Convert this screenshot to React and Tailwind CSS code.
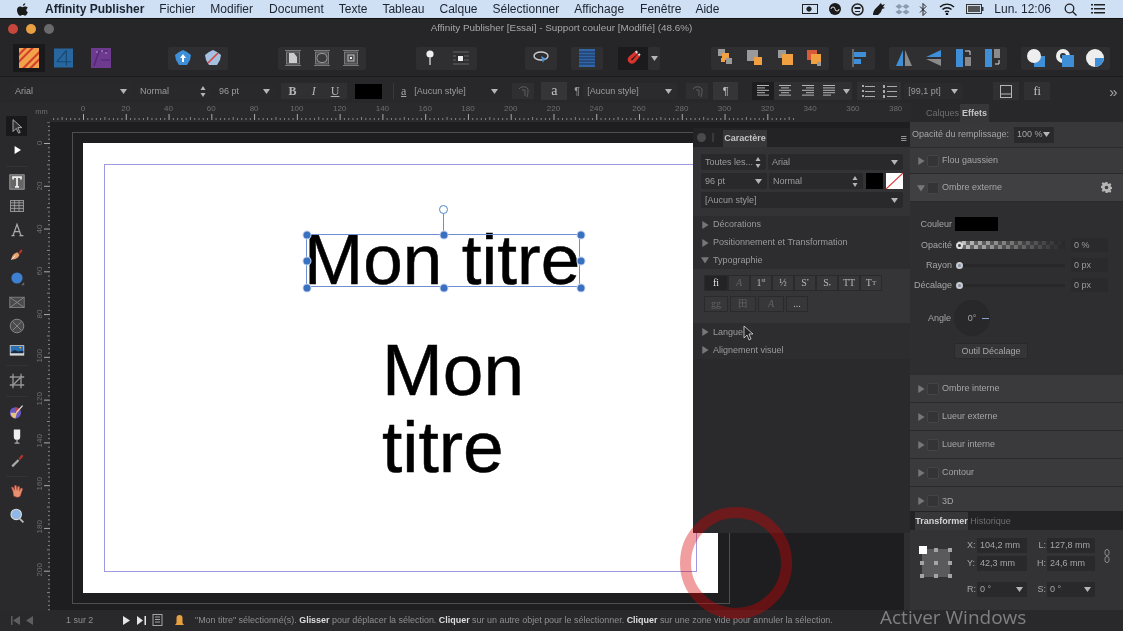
import React from 'react';

const Tri = ({ open, cls = 'fill-[#77777a]' }) => (
  <svg width="8" height="8" viewBox="0 0 9 9" className={cls + ' shrink-0'}>
    {open ? <path d="M0 1.5h9L4.5 8.5z" /> : <path d="M1.5 0l7 4.5-7 4.5z" />}
  </svg>
);
const Down = () => <svg width="7" height="5" viewBox="0 0 7 5" className="fill-[#b5b5b5] shrink-0"><path d="M0 0h7L3.5 5z" /></svg>;
const Updown = () => (
  <svg width="6" height="11" viewBox="0 0 6 11" className="fill-[#b5b5b5] shrink-0"><path d="M3 0l2.5 4h-5zM3 11L.5 7h5z" /></svg>
);

/* ---------- toolbar drawings ---------- */
const PersonaA = () => (
  <svg width="20" height="20" viewBox="0 0 20 20">
    <rect width="20" height="20" fill="#f2a24a" />
    <path d="M0 5L5 0h3L0 8zM0 12L12 0h3L0 15zM3 20L20 3v3L6 20zM10 20L20 10v3l-7 7z" fill="#d2402c" />
  </svg>
);
const PersonaB = () => (
  <svg width="20" height="20" viewBox="0 0 20 20">
    <rect width="20" height="20" fill="#27669e" />
    <path d="M3 14L13 2M13 2v16M3 14h15" stroke="#174770" strokeWidth="1.2" fill="none" />
  </svg>
);
const PersonaC = () => (
  <svg width="20" height="20" viewBox="0 0 20 20">
    <rect width="20" height="20" fill="#6d3a8f" />
    <path d="M3 18L8 3M8 3h9M10 12h9" stroke="#4e2670" strokeWidth="1.2" fill="none" />
    <circle cx="11" cy="3" r="1" fill="#9b79c0" /><circle cx="15" cy="5" r="1" fill="#9b79c0" /><circle cx="6" cy="4" r="1" fill="#9b79c0" />
  </svg>
);
const Penta = ({ fill, slash }) => (
  <svg width="18" height="18" viewBox="0 0 18 18">
    <path d="M9 1l4 2 4 3-1 5-3 5H5l-3-5-1-5 4-3z" fill={fill} />
    {slash ? <path d="M4 14L14 4" stroke="#d8453a" strokeWidth="1.6" /> : <path d="M9 5l3 4h-2v4H8V9H6z" fill="#fff" />}
  </svg>
);
const DocI = ({ kind }) => (
  <svg width="18" height="18" viewBox="0 0 18 18">
    <path d="M1 1.5h16M1 16.5h16" stroke="#7a7a7c" strokeWidth="1" />
    <rect x="2.5" y="3" width="13" height="12" fill="#4c4c4e" stroke="#7a7a7c" />
    {kind === 0 && <path d="M5 4h5l3 4v6H5z" fill="#ccc" />}
    {kind === 1 && <rect x="4" y="4.5" width="10" height="9" rx="4" fill="#3a3a3c" stroke="#999" />}
    {kind === 2 && <><rect x="6" y="6" width="6" height="6" fill="none" stroke="#bbb" /><rect x="8" y="8" width="2" height="2" fill="#eee" /></>}
  </svg>
);
const Pin = () => (
  <svg width="14" height="18" viewBox="0 0 14 18">
    <circle cx="7" cy="5" r="3.6" fill="#eee" /><path d="M7 8v8" stroke="#bbb" strokeWidth="1.6" />
  </svg>
);
const Wrap = () => (
  <svg width="18" height="16" viewBox="0 0 18 16">
    <path d="M1 2h16M1 14h16M12 6h5M12 10h5M1 6h3M1 10h3" stroke="#666" strokeWidth="1.2" />
    <rect x="6" y="6" width="5" height="5" fill="#eee" />
  </svg>
);
const Lasso = () => (
  <svg width="18" height="16" viewBox="0 0 18 16" fill="none">
    <ellipse cx="9" cy="6" rx="7" ry="4" stroke="#ccc" strokeWidth="1.4" />
    <path d="M9 6l2 7 1-3 3-1z" fill="#4a8fd8" />
  </svg>
);
const Stack = () => (
  <svg width="16" height="18" viewBox="0 0 16 18">
    <rect width="16" height="18" fill="#2e66a8" />
    <path d="M0 3h16M0 6h16M0 9h16M0 12h16M0 15h16" stroke="#1d2f4e" strokeWidth="1" />
  </svg>
);
const Magnet = () => (
  <svg width="18" height="18" viewBox="0 0 18 18" fill="none">
    <path d="M13 3L6 9a2.5 2.5 0 0 0 3.5 3.5L15 6" stroke="#d8342c" strokeWidth="3.4" />
    <path d="M12 2l1 2M16 5l-1.5 1.2" stroke="#ddd" strokeWidth="2" />
  </svg>
);
const Order = ({ k }) => {
  const o = '#f0a040', g = '#9a9a9a';
  const set = [
    [[2, 1, 7, g], [6, 5, 7, o], [10, 10, 6, g], [5, 10, 4, o]],
    [[2, 2, 11, g], [9, 9, 8, o]],
    [[3, 2, 8, g], [7, 6, 11, o]],
    [[3, 2, 10, '#d85a3a'], [7, 6, 10, o], [13, 14, 4, g]],
  ][k];
  return (
    <svg width="20" height="20" viewBox="0 0 20 20">
      {set.map((r, i) => <rect key={i} x={r[0]} y={r[1]} width={r[2]} height={r[2]} fill={r[3]} />)}
    </svg>
  );
};
const AlignI = () => (
  <svg width="18" height="18" viewBox="0 0 18 18">
    <path d="M3 0v18" stroke="#777" strokeWidth="1.6" />
    <rect x="4" y="3" width="12" height="5" fill="#3f8ed8" /><rect x="4" y="10" width="7" height="5" fill="#3f8ed8" />
  </svg>
);
const Flip = ({ k }) => (
  <svg width="20" height="20" viewBox="0 0 20 20">
    {k === 0 && <><path d="M9 2v16H2z" fill="#3f8ed8" /><path d="M11 2v16h7z" fill="#8a8a8a" /></>}
    {k === 1 && <><path d="M18 2v7H3z" fill="#3f8ed8" /><path d="M18 18v-7H3z" fill="#8a8a8a" /></>}
    {k === 2 && <><rect x="3" y="1" width="7" height="18" fill="#3f8ed8" /><rect x="12" y="9" width="6" height="9" fill="#8a8a8a" /><path d="M12 3h5v4" stroke="#ddd" fill="none" /></>}
    {k === 3 && <><rect x="3" y="1" width="7" height="18" fill="#3f8ed8" /><rect x="12" y="1" width="6" height="9" fill="#8a8a8a" /><path d="M17 12v4h-4" stroke="#ddd" fill="none" /></>}
  </svg>
);
const Bool = ({ k }) => (
  <svg width="20" height="20" viewBox="0 0 20 20">
    {k === 0 && <><rect x="8" y="8" width="11" height="11" fill="#3f8ed8" /><circle cx="8" cy="8" r="7" fill="#eee" /></>}
    {k === 1 && <><circle cx="8" cy="8" r="7" fill="#eee" /><circle cx="8" cy="8" r="3" fill="#333" /><rect x="7" y="7" width="12" height="12" fill="#3f8ed8" /></>}
    {k === 2 && <><circle cx="10" cy="10" r="9" fill="#eee" /><path d="M10 10h9a9 9 0 0 1-9 9z" fill="#3f8ed8" /></>}
  </svg>
);

/* ---------- tool column drawings ---------- */
const tools = {
  pointer: <path d="M5 2v15l4-4 3 6 2-1-3-6h5z" fill="#333" stroke="#aaa" strokeWidth="1.2" />,
  node: <path d="M7 5v10l8-5z" fill="#fff" />,
  text: <><rect x="1" y="1" width="18" height="18" fill="#666" stroke="#aaa" /><path d="M5 7V4h10v3M10 4v12M7.5 16h5" stroke="#eee" strokeWidth="2.2" fill="none" /></>,
  table: <><rect x="2" y="3" width="16" height="14" fill="#3a3a3c" stroke="#aaa" /><path d="M2 6h16M2 9.5h16M2 13h16M7 3v14M12.5 3v14" stroke="#aaa" /></>,
  art: <path d="M3 17h4M13 17h5M5 17L10 3l5 14M7 12h6" stroke="#aaa" strokeWidth="1.6" fill="none" />,
  pen: <><path d="M3 17c0-5 4-9 8-9l2 3c-1 4-5 6-10 6z" fill="#e9a071" /><path d="M12 8l3-4 2 2-3 4z" fill="#b5342c" /><path d="M3 17l5-5" stroke="#fff" /></>,
  shape: <><circle cx="10" cy="10" r="7" fill="#3f7fd0" /><path d="M19 15v4h-4z" fill="#666" /></>,
  pic: <><rect x="1" y="4" width="18" height="13" fill="#4a4a4c" stroke="#888" /><path d="M1 4l18 13M19 4L1 17" stroke="#888" strokeWidth="1.2" /></>,
  pic2: <><circle cx="10" cy="10" r="8.500" fill="#4a4a4c" stroke="#888" strokeWidth="1.2" /><path d="M4.500 4.500l11 11M15.500 4.500l-11 11" stroke="#888" strokeWidth="1.2" /></>,
  img: <><rect x="1" y="4" width="18" height="13" fill="#d8d8d8" /><rect x="2" y="5" width="16" height="8" fill="#2a6fb0" /><circle cx="14" cy="7" r="1.2" fill="#f0b040" /><path d="M2 13l5-3 4 2 7-1v3H2z" fill="#152a44" /></>,
  crop: <><rect x="5" y="5" width="10" height="10" fill="none" stroke="#999" strokeWidth="1.6" /><path d="M5 1v4H1M15 19v-4h4M5 15L15 5M1 15h4v4M19 5h-4V1" stroke="#999" strokeWidth="1.6" fill="none" /></>,
  brush: <><circle cx="8" cy="11" r="7" fill="#6a5ac8" /><path d="M2 11a7 7 0 0 0 6 7l2-7z" fill="#e8c080" /><path d="M8 4a7 7 0 0 1 6 5l-6 2z" fill="#c84040" /><path d="M9 11l8-9" stroke="#ddd" strokeWidth="1.6" /></>,
  fill: <><path d="M6 2h8v9a4 4 0 0 1-8 0z" fill="#eee" /><path d="M10 14v4M7 19h6" stroke="#aaa" strokeWidth="1.6" /></>,
  drop: <><path d="M3 17l8-8 2 2-8 8z" fill="#aaa" /><path d="M12 8l4-5 2 2-4 5z" fill="#b5342c" /></>,
  hand: <path d="M5 9l-2-5 2 0 2 4 0-6h2l1 6 1-5h2l0 6 2-4 2 1-3 9c-1 2-6 2-8 0z" fill="#e89070" stroke="#c85040" strokeWidth=".6" />,
  zoom: <><circle cx="9" cy="8" r="6.500" fill="#8fb8e8" stroke="#ddd" strokeWidth="1.4" /><path d="M13 13l5 5" stroke="#bbb" strokeWidth="2.4" /></>,
};
const Tool = ({ n, sel }) => (
  <div className={'flex h-[24px] w-[33px] items-center justify-center'}>
    <div className={'flex h-[20px] w-[21px] items-center justify-center ' + (sel ? 'bg-[#19191b]' : '')}>
      <svg width="16" height="16" viewBox="0 0 20 20">{tools[n]}</svg>
    </div>
  </div>
);
const Sep = ({ cls }) => <div className={cls + ' flex w-[33px] items-center justify-center'}><div className="h-px w-[22px] bg-[#333335]" /></div>;

/* ---------- rulers ---------- */
const MM = 2.1385;
const HRuler = () => {
  const labels = Array.from({ length: 20 }, (_, i) => i * 20);
  const ticks = Array.from({ length: 175 }, (_, i) => i * 2 - 16);
  return (
    <div className="relative h-[19px] flex-1 bg-[#2a2a2c]">
      {labels.map((v) => (
        <span key={v} className="absolute top-[1px] -translate-x-1/2 text-[8px] leading-[10px] text-[#6e6e70]" style={{ left: 33 + v * MM }}>{v}</span>
      ))}
      <svg className="absolute left-0 top-0" width="860" height="19">
        {ticks.map((t) => {
          const x = 33 + t * MM;
          const h = t % 20 === 0 ? 6 : t % 10 === 0 ? 3 : 2;
          return <rect key={t} x={x} y={17 - h} width="1" height={h} fill={t % 20 === 0 ? '#aaa' : '#848486'} />;
        })}
      </svg>
    </div>
  );
};
const VRuler = () => {
  const labels = Array.from({ length: 11 }, (_, i) => i * 20);
  const ticks = Array.from({ length: 120 }, (_, i) => i * 2 - 10);
  return (
    <div className="relative w-[17px] shrink-0 bg-[#2a2a2c]">
      {labels.map((v) => (
        <span key={v} className="absolute left-[1px] -translate-y-1/2 -rotate-90 text-[8px] leading-[10px] text-[#6e6e70]" style={{ top: 21 + v * MM }}>
          <span className="block w-[11px] text-center">{v}</span>
        </span>
      ))}
      <svg className="absolute left-0 top-0" width="17" height="489">
        {ticks.map((t) => {
          const y = 21 + t * MM;
          const w = t % 20 === 0 ? 6 : t % 10 === 0 ? 3 : 2;
          return <rect key={t} x={17 - w} y={y} width={w} height="1" fill={t % 20 === 0 ? '#aaa' : '#848486'} />;
        })}
      </svg>
    </div>
  );
};

/* ---------- panels ---------- */
const Combo = ({ cls, children, arrow = 'down' }) => (
  <div className={cls + ' flex h-[16px] items-center justify-between rounded-[2px] bg-[#29292b] pl-[4px] pr-[5px] text-[#9c9c9e]'}>
    <span className="truncate">{children}</span>
    {arrow === 'down' ? <Down /> : <Updown />}
  </div>
);
const Sect = ({ label, open }) => (
  <div className="flex h-[18px] items-center gap-[4px] pl-[8px] text-[#9a9a9c]"><Tri open={open} /><span>{label}</span></div>
);
const Glyph = ({ cls = 'w-[22px]', dim, children, sel }) => (
  <div className={cls + ' flex h-[16px] items-center justify-center border border-[#2a2a2c] font-["Liberation_Serif",serif] text-[10px] ' + (sel ? 'bg-[#232325] text-[#e5e5e5] ' : 'bg-[#373739] ') + (dim ? 'text-[#636365]' : sel ? '' : 'text-[#b5b5b5]')}>{children}</div>
);
const Check = () => <div className="h-[12px] w-[12px] shrink-0 rounded-[2px] border border-[#444446] bg-[#343436]" />;
const FxRow = ({ label, h = 'h-[28px]', bg = 'bg-[#3a3a3c]', open, gear }) => (
  <div className={h + ' ' + bg + ' flex items-center border-b border-[#2a2a2c] pl-[7px] pr-[11px] text-[#a5a5a7]'}>
    <Tri open={open} />
    <span className="ml-[2px]"><Check /></span>
    <span className="ml-[3px]">{label}</span>
    {gear && (
      <svg className="ml-auto fill-[#b5b5b5]" width="11" height="11" viewBox="0 0 12 12">
        <path fillRule="evenodd" d="M5 0h2l.3 1.6 1.2.5L9.900 1.200l1.400 1.400-.9 1.400.5 1.200 1.600.3v2l-1.600.3-.5 1.200.9 1.400-1.400 1.400-1.400-.9-1.200.5L7 12H5l-.3-1.600-1.200-.5-1.400.9L.7 9.400l.9-1.400-.5-1.200L-.5 6.500v-2l1.600-.3.5-1.200-.9-1.400L2.100 .2l1.400.9 1.200-.5zM6 4a2 2 0 1 0 0 4 2 2 0 0 0 0-4z" />
      </svg>
    )}
  </div>
);
const Field = ({ children, cls = 'w-[37px]' }) => (
  <div className={cls + ' flex h-[14px] items-center rounded-[1px] bg-[#2a2a2c] pl-[3px] text-[#9c9c9e]'}>{children}</div>
);
const SliderRow = ({ label, value, check }) => (
  <div className="flex h-[20px] items-center">
    <span className="w-[40px] text-right text-[#a5a5a7]">{label}</span>
    <div className="relative ml-[6px] h-[3px] w-[107px] rounded bg-[#27272a]">
      {check && (
        <div className="absolute left-0 top-[-3px] h-[8px] w-[107px] bg-[repeating-conic-gradient(#c5c5c5_0_25%,#6a6a6a_0_50%)] bg-[length:8px_8px]">
          <div className="h-full w-full bg-gradient-to-r from-transparent to-[#28282a]" />
        </div>
      )}
      <div className={'absolute left-[-2px] top-[-2px] h-[7px] w-[7px] rounded-full border-2 ' + (check ? 'border-[#ddd] bg-[#333]' : 'border-[#ccc] bg-[#8090b0]')} />
    </div>
    <div className="ml-[6px]"><Field>{value}</Field></div>
  </div>
);

const Group = ({ cls, children }) => (
  <div className={cls + ' flex h-[23px] shrink-0 items-center justify-around rounded-[2px] bg-[#2f2f31]'}>{children}</div>
);
const AlignLines = ({ k }) => {
  const rows = [[12, 8, 12, 8, 12], [12, 8, 12, 8, 12], [12, 8, 12, 8, 12], [12, 12, 12, 12, 8]][k];
  return (
    <svg width="13" height="12" viewBox="0 0 13 12">
      {rows.map((w, i) => {
        const x = k === 0 || k === 3 ? 0 : k === 1 ? (12 - w) / 2 : 12 - w;
        return <rect key={i} x={x} y={i * 2.4} width={w} height="1" fill="#b5b5b5" />;
      })}
    </svg>
  );
};
const ListI = ({ num }) => (
  <svg width="14" height="13" viewBox="0 0 14 13">
    {[1, 6, 11].map((y) => <g key={y}><rect x={num ? 0 : 1} y={y - 1} width="2" height={num ? 3 : 2} fill="#aaa" /><rect x="4" y={y} width="10" height="1" fill="#aaa" /></g>)}
  </svg>
);
const Swirl = () => (
  <svg width="13" height="13" viewBox="0 0 13 13" fill="none" stroke="#5e5e60"><path d="M2 4a5 4 0 0 1 9 0c0 2 0 5-1 8M5 5h3v6" /></svg>
);

export default function App() {
  const menus = [
    ['Fichier', 'ml-[15px]'], ['Modifier', 'ml-[15px]'], ['Document', 'ml-[16px]'], ['Texte', 'ml-[15px]'],
    ['Tableau', 'ml-[15px]'], ['Calque', 'ml-[15px]'], ['Sélectionner', 'ml-[15px]'], ['Affichage', 'ml-[15px]'],
    ['Fenêtre', 'ml-[16px]'], ['Aide', 'ml-[14px]'],
  ];
  const handles = [[306, 234], [443, 234], [580, 234], [306, 260], [580, 260], [306, 287], [443, 287], [580, 287]];
  return (
    <div className="relative flex h-[631px] w-[1123px] flex-col overflow-hidden bg-[#232325] font-['Liberation_Sans',sans-serif] text-[9px] leading-none text-[#a5a5a7] blur-[0.35px]">
      {/* mac menu bar */}
      <div className="flex h-[18px] shrink-0 items-center bg-[#cfdff4] pl-[17px] text-[12px] text-[#1c2430]">
        <svg width="11" height="13" viewBox="0 0 14 16" className="fill-[#1a1a1a]"><path d="M10.500 0c.1 1.700-1.300 3.300-3 3.200C7.300 1.600 8.900.1 10.500 0zM13.800 11.600c-.7 1.700-2 4.300-3.500 4.300-1.200 0-1.600-.8-3-.8s-1.800.8-3 .8C2.200 16 0 11.600 0 8.800 0 5.900 1.900 4.200 3.800 4.200c1.300 0 2.300.9 3.200.9.800 0 2.100-1 3.600-.9.600 0 2.300.2 3.200 1.700-2.700 1.700-2.300 4.700 0 5.700z" /></svg>
        <span className="ml-[17px] font-bold">Affinity Publisher</span>
        {menus.map(([m, c]) => <span key={m} className={c}>{m}</span>)}
        <div className="ml-auto flex items-center gap-[8px] pr-[18px]">
          <svg width="16" height="12" viewBox="0 0 16 12" fill="none" stroke="#222"><rect x=".5" y="1.500" width="15" height="9" /><circle cx="7" cy="6" r="2.200" fill="#222" /></svg>
          <svg className="ml-[1px]" width="16" height="12" viewBox="0 0 16 12"><circle cx="8" cy="6" r="6" fill="#1a1a1a" /><path d="M4 6a2 2 0 0 1 4 0 2 2 0 0 0 4 0" stroke="#ddd" fill="none" /></svg>
          <svg width="13" height="13" viewBox="0 0 13 13"><circle cx="6.500" cy="6.500" r="5.500" fill="#cfdff4" stroke="#222" strokeWidth="1.500" /><rect x="3.500" y="4" width="6" height="2" fill="#222" /><path d="M4 8.500h5" stroke="#222" /></svg>
          <svg width="14" height="14" viewBox="0 0 14 14"><path d="M1 13C1 7 6 5 7 3l2-2 1 2 3-1-2 3 2 1-3 1-1 3-3 3z" fill="#1c1c1c" /></svg>
          <svg width="15" height="13" viewBox="0 0 15 13" className="ml-[1px] fill-[#8a9ab0]"><path d="M4 1l3.500 2.500L4 6 .5 3.500zM11 1l3.500 2.500L11 6 7.500 3.500zM4 6.500L7.500 9 4 11.500.5 9zM11 6.500L14.500 9 11 11.500 7.500 9z" /></svg>
          <svg className="ml-[1px]" width="8" height="13" viewBox="0 0 8 13" fill="none" stroke="#222"><path d="M1 3.500l6 6-3 3V.5l3 3-6 6" /></svg>
          <svg className="ml-[4px]" width="16" height="12" viewBox="0 0 16 12" fill="none" stroke="#111" strokeWidth="1.400"><path d="M1 4a10 10 0 0 1 14 0M3.500 6.500a6.500 6.500 0 0 1 9 0M6 9a3 3 0 0 1 4 0" /><circle cx="8" cy="11" r=".6" /></svg>
          <svg className="ml-[3px]" width="18" height="10" viewBox="0 0 18 10"><rect x=".5" y=".5" width="15" height="9" fill="#cfdff4" stroke="#333" /><rect x="2" y="2" width="12" height="6" fill="#555" /><rect x="16" y="3" width="1.500" height="4" fill="#333" /></svg>
          <span className="ml-[2px]">Lun. 12:06</span>
          <svg className="ml-[5px]" width="13" height="13" viewBox="0 0 13 13" fill="none" stroke="#222" strokeWidth="1.300"><circle cx="5.500" cy="5.500" r="4.300" /><path d="M8.500 8.500L12.500 12.500" /></svg>
          <svg className="ml-[6px]" width="14" height="10" viewBox="0 0 14 10" fill="#222"><rect width="2" height="1.500" /><rect x="3" width="11" height="1.500" /><rect y="4" width="2" height="1.500" /><rect x="3" y="4" width="11" height="1.500" /><rect y="8" width="2" height="1.500" /><rect x="3" y="8" width="11" height="1.500" /></svg>
        </div>
      </div>

      {/* window title */}
      <div className="relative flex h-[20px] shrink-0 items-center justify-center border-t border-[#111] bg-[#262628] pb-[2px] text-[9.900px] text-[#a8a8aa]">
        <div className="absolute left-[8px] top-[5px] flex gap-[8px]">
          <span className="h-[10px] w-[10px] rounded-full bg-[#c8473c]" />
          <span className="h-[10px] w-[10px] rounded-full bg-[#e8a040]" />
          <span className="h-[10px] w-[10px] rounded-full bg-[#6a6a6c]" />
        </div>
        <span>Affinity Publisher [Essai] - Support couleur [Modifié] (48.6%)</span>
      </div>

      {/* main toolbar */}
      <div className="flex h-[38px] shrink-0 items-center bg-[#262628] pt-[2px]">
        <div className="ml-[13px] flex h-[28px] w-[32px] items-center justify-center bg-[#19191b]"><PersonaA /></div>
        <div className="ml-[9px] flex w-[19px] justify-center"><PersonaB /></div>
        <div className="ml-[18px] flex w-[20px] justify-center"><PersonaC /></div>
        <Group cls="ml-[57px] w-[60px]"><Penta fill="#3f8ed8" /><Penta fill="#a5c0e0" slash /></Group>
        <Group cls="ml-[50px] w-[88px]"><DocI kind={0} /><DocI kind={1} /><DocI kind={2} /></Group>
        <Group cls="ml-[50px] w-[61px]"><Pin /><Wrap /></Group>
        <Group cls="ml-[48px] w-[32px]"><Lasso /></Group>
        <Group cls="ml-[14px] w-[32px]"><Stack /></Group>
        <div className="ml-[15px] flex h-[23px] w-[30px] shrink-0 items-center justify-center bg-[#1b1b1d]"><Magnet /></div>
        <Group cls="w-[12px]"><Down /></Group>
        <Group cls="ml-[51px] w-[118px]"><Order k={0} /><Order k={1} /><Order k={2} /><Order k={3} /></Group>
        <Group cls="ml-[14px] w-[32px]"><AlignI /></Group>
        <Group cls="ml-[14px] w-[118px]"><Flip k={0} /><Flip k={1} /><Flip k={2} /><Flip k={3} /></Group>
        <Group cls="ml-[14px] w-[89px]"><Bool k={0} /><Bool k={1} /><Bool k={2} /></Group>
      </div>

      {/* context toolbar */}
      <div className="flex h-[27px] shrink-0 items-center border-t border-[#1c1c1e] bg-[#28282a] pt-[2px]">
        <Combo cls="ml-[11px] w-[121px]">Arial</Combo>
        <Combo cls="ml-[4px] w-[75px]" arrow="ud">Normal</Combo>
        <Combo cls="ml-[4px] w-[60px]">96 pt</Combo>
        <div className="ml-[6px] flex h-[16px] w-[66px] items-center justify-around bg-[#303032] font-['Liberation_Serif',serif] text-[12px] text-[#b5b5b5]">
          <b>B</b><i>I</i><span className="underline">U</span>
        </div>
        <div className="ml-[8px] h-[15px] w-[27px] bg-black" />
        <div className="ml-[11px] h-[16px] w-px bg-[#3a3a3c]" />
        <span className="ml-[7px] font-['Liberation_Serif',serif] text-[12px] text-[#a5a5a7] underline">a</span>
        <Combo cls="ml-[4px] w-[93px] !bg-transparent">[Aucun style]</Combo>
        <div className="ml-[9px] flex h-[16px] w-[22px] items-center justify-center bg-[#2f2f31]"><Swirl /></div>
        <div className="ml-[7px] flex h-[18px] w-[26px] items-center justify-center bg-[#353537] font-['Liberation_Serif',serif] text-[14px] text-[#c5c5c5]">a</div>
        <span className="ml-[7px] text-[11px] text-[#9a9a9c]">¶</span>
        <Combo cls="ml-[3px] w-[94px] !bg-[#2b2b2d]">[Aucun style]</Combo>
        <div className="ml-[9px] flex h-[16px] w-[22px] items-center justify-center bg-[#2f2f31]"><Swirl /></div>
        <div className="ml-[5px] flex h-[18px] w-[25px] items-center justify-center bg-[#353537] text-[11px] text-[#c5c5c5]">¶</div>
        <div className="ml-[14px] flex h-[18px] w-[100px] items-center bg-[#303032]">
          <div className="flex h-full w-[22px] items-center justify-center bg-[#1d1d1f]"><AlignLines k={0} /></div>
          <div className="flex h-full w-[23px] items-center justify-center"><AlignLines k={1} /></div>
          <div className="flex h-full w-[22px] items-center justify-center"><AlignLines k={2} /></div>
          <div className="flex h-full w-[21px] items-center justify-center"><AlignLines k={3} /></div>
          <div className="flex h-full w-[12px] items-center justify-center"><Down /></div>
        </div>
        <div className="ml-[5px] flex h-[18px] w-[44px] items-center justify-around bg-[#303032]"><ListI /><ListI num /></div>
        <Combo cls="ml-[3px] w-[59px] !bg-[#2b2b2d]">[99,1 pt]</Combo>
        <div className="ml-[30px] flex h-[18px] w-[26px] items-center justify-center bg-[#303032]">
          <svg width="12" height="13" viewBox="0 0 12 13" fill="none" stroke="#b5b5b5"><rect x=".5" y=".5" width="11" height="12" /><path d="M.5 9h11" /></svg>
        </div>
        <div className="ml-[5px] flex h-[18px] w-[26px] items-center justify-center bg-[#303032] font-['Liberation_Serif',serif] text-[12px] text-[#c5c5c5]">fi</div>
        <span className="ml-[59px] text-[15px] text-[#a5a5a7]">»</span>
      </div>

      {/* work area */}
      <div className="flex min-h-0 flex-1">
        <div className="flex w-[33px] shrink-0 flex-col bg-[#2a2a2c] pt-[11px]">
          <Tool n="pointer" sel /><Tool n="node" />
          <Sep cls="h-[8px]" />
          <Tool n="text" /><Tool n="table" /><Tool n="art" /><Tool n="pen" /><Tool n="shape" /><Tool n="pic" /><Tool n="pic2" /><Tool n="img" />
          <Sep cls="h-[7px]" />
          <Tool n="crop" />
          <Sep cls="h-[7px]" />
          <Tool n="brush" /><Tool n="fill" /><Tool n="drop" />
          <Sep cls="h-[8px]" />
          <Tool n="hand" /><Tool n="zoom" />
        </div>

        <div className="flex min-w-0 flex-1 flex-col">
          <div className="flex h-[19px] shrink-0">
            <div className="flex w-[17px] items-start justify-center bg-[#2a2a2c] pt-[5px] text-[7.500px] text-[#6e6e70]">mm</div>
            <HRuler />
          </div>
          <div className="flex min-h-0 flex-1">
            <VRuler />
            {/* canvas */}
            <div className="relative flex-1 overflow-hidden bg-[#1e1e20]">
              <div className="absolute left-[22px] top-[10px] h-[472px] w-[658px] border border-[#4e4e50]" />
              <div className="absolute left-[33px] top-[21px] h-[450px] w-[635px] bg-white">
                <div className="absolute left-[21px] top-[21px] h-[408px] w-[593px] border border-[#9d9ae2]" />
              </div>
              {/* selected title */}
              <div className="absolute left-[254px] top-[100px] text-[71px] leading-[76px] text-black [-webkit-text-stroke:0.5px_black]">Mon titre</div>
              <div className="absolute left-[256px] top-[112px] h-[53px] w-[274px] border border-[#6f8fd0]" />
              <div className="absolute left-[393px] top-[89px] h-[24px] w-px bg-[#6f8fd0]" />
              <div className="absolute left-[389px] top-[83px] h-[9px] w-[9px] rounded-full border border-[#4f86c8] bg-white" />
              {handles.map(([x, y]) => (
                <div key={x + '-' + y} className="absolute h-[7px] w-[7px] -translate-x-1/2 -translate-y-1/2 rounded-full bg-[#3a70c0] ring-1 ring-[#c5d5f0]" style={{ left: x - 50 + 0.5, top: y - 122 + 0.5 }} />
              ))}
              <div className="absolute left-[332px] top-[209px] text-[73px] leading-[77px] text-black [-webkit-text-stroke:0.5px_black]">Mon<br />titre</div>

              {/* floating character panel */}
              <div className="absolute bottom-[77px] left-[643px] top-[6px] flex w-[217px] flex-col bg-[#2a2a2c]">
                <div className="flex h-[19px] shrink-0 items-end bg-[#232325]">
                  <span className="mb-[5px] ml-[4px] h-[9px] w-[9px] rounded-full bg-[#4a4a4c]" />
                  <span className="mb-[5px] ml-[6px] h-[9px] w-[2px] border-x border-[#39393b]" />
                  <div className="ml-[9px] flex h-[17px] w-[44px] items-center justify-center bg-[#37373a] font-bold text-[#c5c5c7]">Caractère</div>
                  <span className="mb-[3px] ml-auto mr-[3px] text-[11px] text-[#b5b5b5]">≡</span>
                </div>
                <div className="flex h-[69px] shrink-0 flex-col gap-[3px] bg-[#333335] pl-[8px] pr-[7px] pt-[7px]">
                  <div className="flex gap-[2px]">
                    <Combo cls="w-[65px]" arrow="ud">Toutes les...</Combo>
                    <Combo cls="flex-1">Arial</Combo>
                  </div>
                  <div className="flex gap-[2px]">
                    <Combo cls="w-[66px]">96 pt</Combo>
                    <Combo cls="w-[94px]" arrow="ud">Normal</Combo>
                    <div className="ml-[1px] h-[16px] w-[17px] bg-black" />
                    <svg className="ml-[1px]" width="17" height="16" viewBox="0 0 17 16"><rect width="17" height="16" fill="#fff" /><path d="M0 16L17 0" stroke="#d83a3a" strokeWidth="1.200" /></svg>
                  </div>
                  <Combo cls="w-full">[Aucun style]</Combo>
                </div>
                <div className="flex h-[53px] shrink-0 flex-col justify-center bg-[#2d2d2f]">
                  <Sect label="Décorations" /><Sect label="Positionnement et Transformation" /><Sect label="Typographie" open />
                </div>
                <div className="flex h-[54px] shrink-0 flex-col gap-[5px] bg-[#353537] pl-[11px] pt-[6px]">
                  <div className="flex">
                    <Glyph cls="w-[24px]" sel>fi</Glyph>
                    <Glyph dim><i>A</i></Glyph>
                    <Glyph>1<sup className="text-[6px]">st</sup></Glyph>
                    <Glyph>½</Glyph>
                    <Glyph>S<sup className="text-[6px]">•</sup></Glyph>
                    <Glyph>S<sub className="text-[6px]">•</sub></Glyph>
                    <Glyph>TT</Glyph>
                    <Glyph>T<span className="text-[7px]">T</span></Glyph>
                  </div>
                  <div className="flex gap-[2px]">
                    <Glyph cls="w-[24px]" dim>gg</Glyph>
                    <Glyph cls="w-[26px]" dim>田</Glyph>
                    <Glyph cls="w-[26px]" dim><i>A</i></Glyph>
                    <Glyph>...</Glyph>
                  </div>
                </div>
                <div className="flex h-[36px] shrink-0 flex-col justify-center bg-[#2d2d2f]">
                  <Sect label="Langue" /><Sect label="Alignement visuel" />
                </div>
              </div>
              <div className="absolute bottom-0 right-0 top-[411px] w-[6px] bg-[#2f2f31]" />
            </div>
          </div>
        </div>

        {/* right dock */}
        <div className="flex w-[213px] shrink-0 flex-col bg-[#333335]">
          <div className="flex h-[19px] shrink-0 items-end bg-[#28282a] pl-[15px]">
            <div className="flex h-[18px] w-[35px] items-center justify-center text-[#6e6e70]">Calques</div>
            <div className="flex h-[18px] w-[29px] items-center justify-center bg-[#37373a] font-bold text-[#c5c5c7]">Effets</div>
          </div>
          <div className="flex h-[26px] shrink-0 items-center border-b border-[#2a2a2c] bg-[#38383a] pl-[2px] text-[#a5a5a7]">
            <span>Opacité du remplissage:</span>
            <div className="ml-[5px] flex h-[16px] w-[40px] items-center justify-between whitespace-nowrap bg-[#29292b] pl-[3px] pr-[4px]">100 %<Down /></div>
          </div>
          <FxRow label="Flou gaussien" h="h-[26px]" />
          <FxRow label="Ombre externe" h="h-[28px]" bg="bg-[#404042]" open gear />
          <div className="h-[173px] shrink-0 bg-[#2e2e30] pl-[2px]">
            <div className="flex h-[29px] items-end">
              <span className="w-[40px] pb-[2px] text-right">Couleur</span>
              <div className="ml-[3px] h-[14px] w-[43px] bg-black" />
            </div>
            <div className="mt-[4px]">
              <SliderRow label="Opacité" value="0 %" check />
              <SliderRow label="Rayon" value="0 px" />
              <SliderRow label="Décalage" value="0 px" />
            </div>
            <div className="mt-[5px] flex items-center">
              <span className="w-[39px] text-right">Angle</span>
              <div className="relative ml-[3px] flex h-[36px] w-[36px] items-center justify-center rounded-full bg-[#28282a] text-[#a5a5a7]">
                0°
                <div className="absolute right-[1px] top-[18px] h-px w-[7px] bg-[#8aa0d0]" />
              </div>
            </div>
            <div className="ml-[43px] mt-[8px] flex h-[14px] w-[72px] items-center justify-center rounded-[1px] bg-[#353537] text-[#a5a5a7] shadow-[0_0_0_1px_#29292b]">Outil Décalage</div>
          </div>
          <FxRow label="Ombre interne" />
          <FxRow label="Lueur externe" />
          <FxRow label="Lueur interne" />
          <FxRow label="Contour" />
          <div className="pt-[4px] h-[24px] shrink-0 bg-[#3a3a3c]">
            <div className="flex h-full items-center pl-[7px] text-[#a5a5a7]">
              <Tri />
              <span className="ml-[2px]"><Check /></span>
              <span className="ml-[3px]">3D</span>
            </div>
          </div>
          <div className="flex h-[19px] shrink-0 items-end bg-[#232325] pl-[5px]">
            <div className="flex h-[18px] w-[53px] items-center justify-center bg-[#37373a] font-bold text-[#d5d5d7]">Transformer</div>
            <div className="flex h-[18px] w-[45px] items-center justify-center text-[#6e6e70]">Historique</div>
          </div>
          <div className="flex flex-1 bg-[#333335] pl-[8px] pt-[8px]">
            <div className="relative mt-[5px] h-[36px] w-[32px]">
              <div className="absolute left-[4px] top-[6px] h-[28px] w-[28px] bg-[#5a5a5c]" />
              {[0, 1, 2].flatMap((r) => [0, 1, 2].map((c) => (
                <span key={r + '-' + c} className={'absolute h-[4px] w-[4px] bg-[#a5a5a7]'} style={{ left: 2 + c * 14, top: 5 + r * 13 }} />
              )))}
              <span className="absolute left-[1px] top-[3px] h-[8px] w-[8px] bg-white" />
            </div>
            <div className="ml-[17px] flex flex-col">
              <div className="grid grid-cols-[10px_50px_20px_48px] items-center gap-y-[3px]">
                <span>X:</span><div className="flex h-[15px] items-center rounded-[1px] bg-[#29292b] pl-[3px] text-[#a5a5a7]">104,2 mm</div>
                <span className="text-right pr-[1px]">L:</span><div className="flex h-[15px] items-center rounded-[1px] bg-[#29292b] pl-[3px] text-[#a5a5a7]">127,8 mm</div>
                <span>Y:</span><div className="flex h-[15px] items-center rounded-[1px] bg-[#29292b] pl-[3px] text-[#a5a5a7]">42,3 mm</div>
                <span className="text-right pr-[1px]">H:</span><div className="flex h-[15px] items-center rounded-[1px] bg-[#29292b] pl-[3px] text-[#a5a5a7]">24,6 mm</div>
              </div>
              <div className="mt-[11px] grid grid-cols-[10px_50px_20px_48px] items-center">
                <span>R:</span><div className="flex h-[15px] items-center justify-between rounded-[1px] bg-[#29292b] pl-[3px] pr-[4px]">0 °<Down /></div>
                <span className="text-right pr-[1px]">S:</span><div className="flex h-[15px] items-center justify-between rounded-[1px] bg-[#29292b] pl-[3px] pr-[4px]">0 °<Down /></div>
              </div>
            </div>
            <svg className="ml-[9px] mt-[11px]" width="6" height="14" viewBox="0 0 6 14" fill="none" stroke="#8a8a8c"><rect x="1" y=".5" width="4" height="6" rx="2" /><rect x="1" y="7.500" width="4" height="6" rx="2" /></svg>
          </div>
        </div>
      </div>

      {/* status bar */}
      <div className="flex h-[21px] shrink-0 items-center bg-[#29292b] pb-[1px] text-[8.950px] text-[#8f8f91]">
        <svg className="ml-[11px]" width="9" height="9" viewBox="0 0 9 9" fill="#5e5e60"><rect width="1.500" height="9" /><path d="M9 0v9L2 4.500z" /></svg>
        <svg className="ml-[6px]" width="7" height="9" viewBox="0 0 7 9" fill="#5e5e60"><path d="M7 0v9L0 4.500z" /></svg>
        <span className="ml-[33px] w-[45px]">1 sur 2</span>
        <svg className="ml-[12px]" width="7" height="9" viewBox="0 0 7 9" fill="#e5e5e5"><path d="M0 0v9l7-4.500z" /></svg>
        <svg className="ml-[7px]" width="9" height="9" viewBox="0 0 9 9" fill="#e5e5e5"><path d="M0 0v9l6-4.500z" /><rect x="7.500" width="1.500" height="9" /></svg>
        <svg className="ml-[6px]" width="11" height="12" viewBox="0 0 11 12" fill="none" stroke="#a5a5a7"><rect x="1" y=".5" width="9" height="11" /><path d="M3 3h5M3 5.500h5M3 8h5" /></svg>
        <svg className="ml-[12px]" width="9" height="11" viewBox="0 0 9 11" fill="#e8a040"><path d="M4.500 0a3 3 0 0 1 3 3v5l1.500 2H0l1.500-2V3a3 3 0 0 1 3-3z" /></svg>
        <span className="ml-[11px]">"Mon titre" sélectionné(s). <b className="text-[#dedee0]">Glisser</b> pour déplacer la sélection. <b className="text-[#dedee0]">Cliquer</b> sur un autre objet pour le sélectionner. <b className="text-[#dedee0]">Cliquer</b> sur une zone vide pour annuler la sélection.</span>
      </div>

      {/* recording overlays */}
      <svg className="pointer-events-none absolute left-[675px] top-[502px]" width="122" height="122" viewBox="0 0 122 122" fill="none">
        <circle cx="61" cy="61" r="50.500" stroke="rgba(218,0,5,0.38)" strokeWidth="11" />
      </svg>
      <svg className="pointer-events-none absolute left-[743px] top-[326px]" width="10" height="15" viewBox="0 0 10 15">
        <path d="M1 0v12l3-3 2 5 2-1-2-5h4z" fill="#222" stroke="#ddd" strokeWidth=".8" />
      </svg>
      <span className="pointer-events-none absolute left-[880px] top-[606px] font-['Open_Sans',sans-serif] text-[19px] leading-[22px] text-[#808082]">Activer Windows</span>
    </div>
  );
}
